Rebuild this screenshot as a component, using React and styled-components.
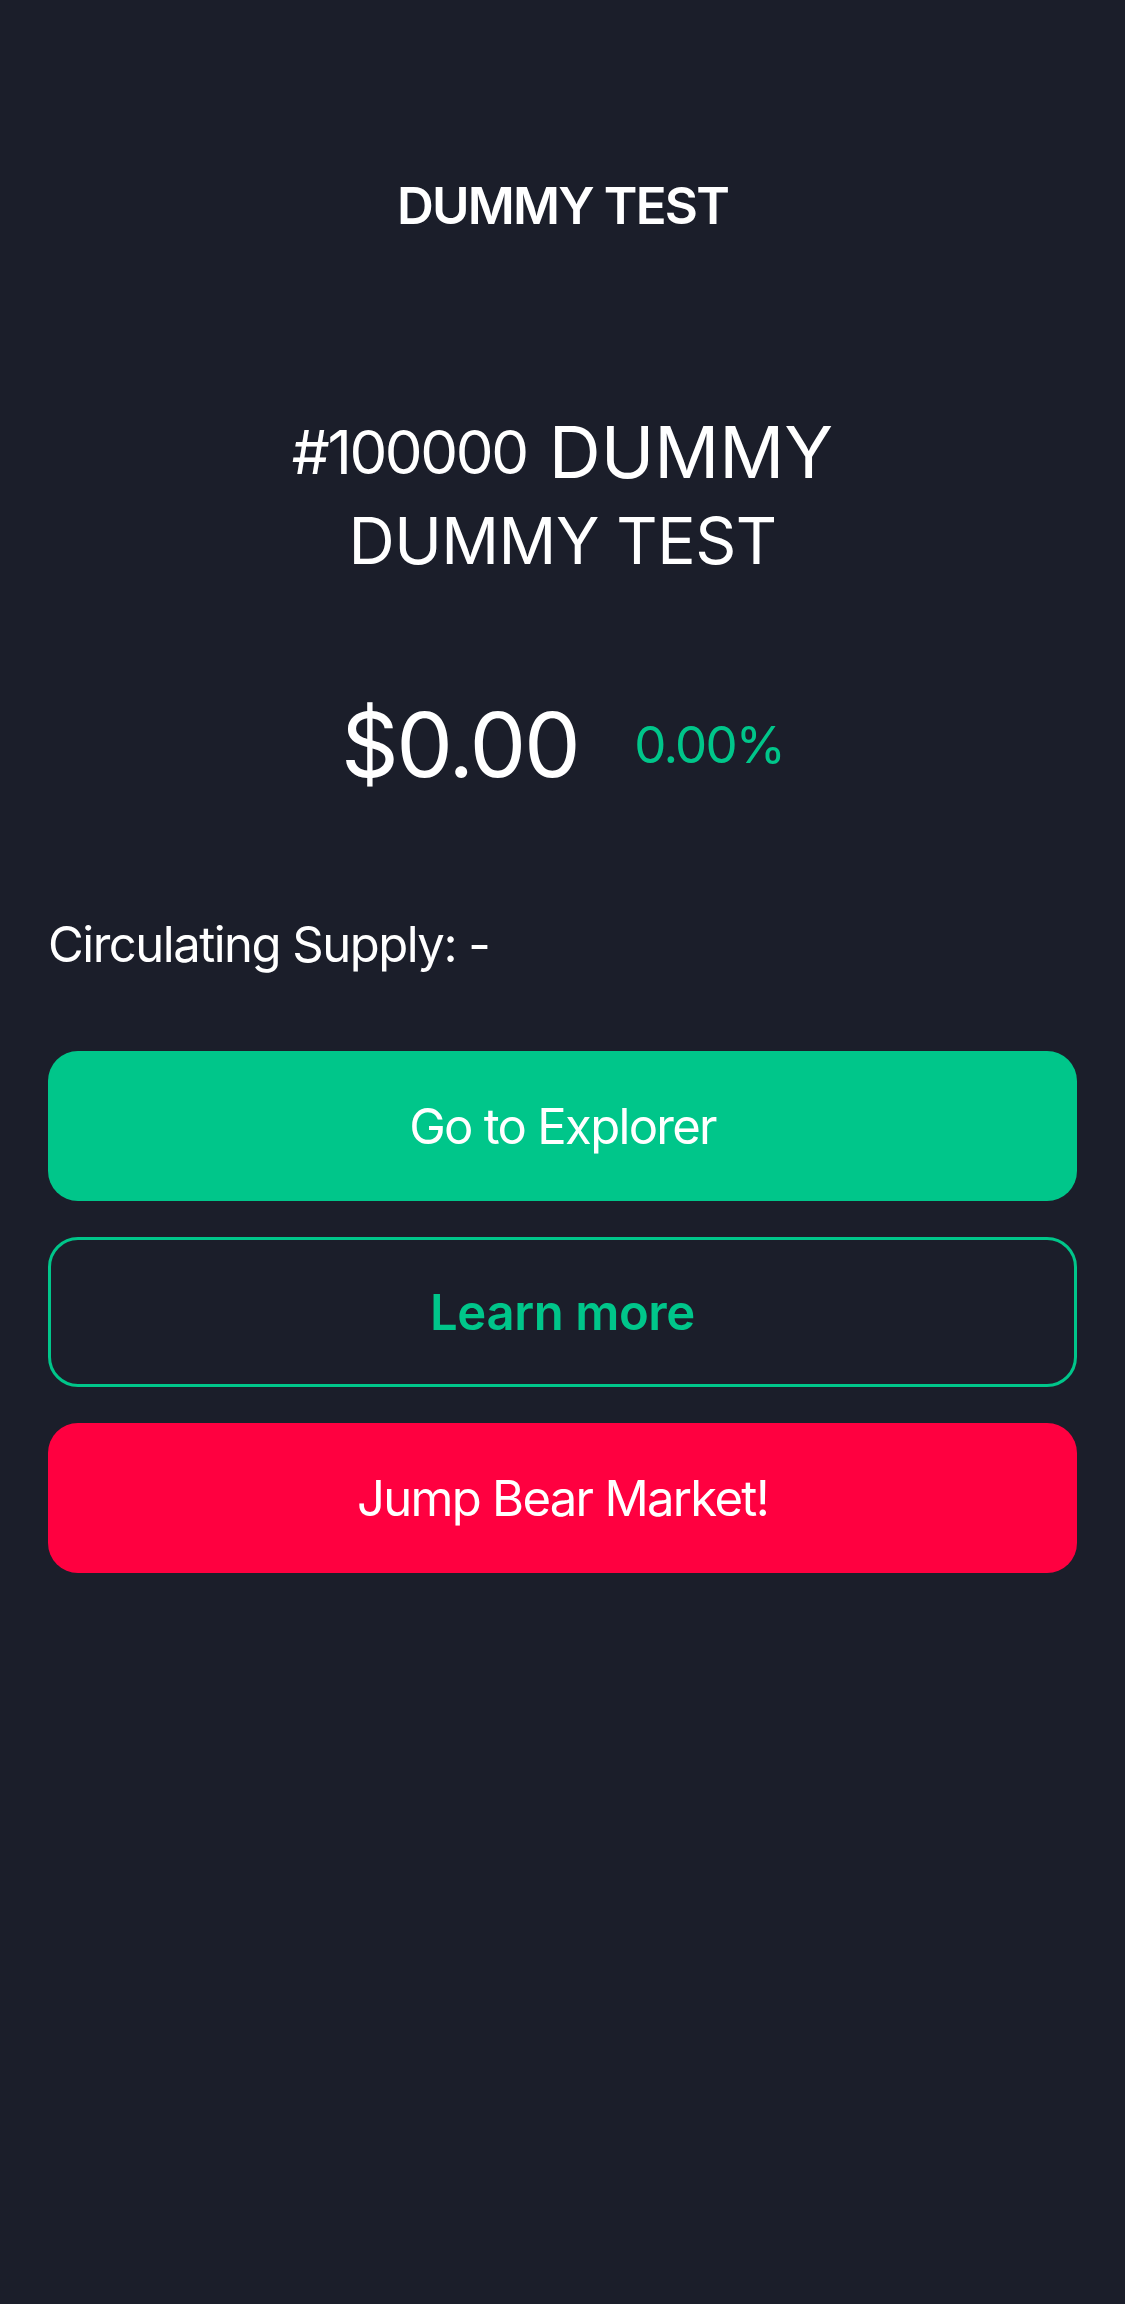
import React from 'react';
import styled, { createGlobalStyle } from 'styled-components';

const GlobalStyle = createGlobalStyle`
  html, body {
    margin: 0;
    padding: 0;
    background-color: #1b1e2a;
  }
  body {
    font-family: Inter, "Noto Sans", "Liberation Sans", sans-serif;
    color: #ffffff;
  }
`;

const Screen = styled.div`
  width: 1125px;
  min-height: 2304px;
  background-color: #1b1e2a;
  display: flex;
  flex-direction: column;
  align-items: center;
  box-sizing: border-box;
  padding: 176px 48px 0;
`;

const NavTitle = styled.h1`
  margin: 0;
  font-size: 51px;
  line-height: 60px;
  font-weight: 600;
  letter-spacing: -1.8px;
`;

const Title = styled.div`
  margin-top: 173px;
  display: flex;
  flex-direction: column;
  align-items: center;
`;

const TitleRow = styled.div`
  display: flex;
  align-items: center;
  justify-content: center;
  height: 86px;
  gap: 22px;
`;

const Rank = styled.span`
  font-size: 60px;
  line-height: 86px;
  letter-spacing: -2.4px;
`;

// second line of the name is set a little smaller, like the reference
const Name = styled.span`
  font-size: ${p => (p.$small ? '64px' : '72px')};
  line-height: ${p => (p.$small ? '80px' : '86px')};
  padding-top: ${p => (p.$small ? '6px' : '0')};
  letter-spacing: ${p => (p.$small ? '-0.5px' : '0')};
`;

const PriceRow = styled.div`
  margin-top: 109px;
  display: flex;
  align-items: center;
  justify-content: center;
  gap: 56px;
  height: 110px;
`;

const Price = styled.span`
  font-size: 90px;
  line-height: 110px;
  letter-spacing: -2.4px;
`;

const Change = styled.span`
  font-size: 51px;
  line-height: 60px;
  letter-spacing: -1.8px;
  color: #00c68a;
`;

const Supply = styled.p`
  align-self: stretch;
  margin: 115px 0 0;
  font-size: 49px;
  line-height: 60px;
  letter-spacing: -1.5px;
`;

const Actions = styled.div`
  align-self: stretch;
  margin-top: 76px;
  display: flex;
  flex-direction: column;
  gap: 36px;
`;

const Button = styled.button`
  height: 150px;
  width: 100%;
  box-sizing: border-box;
  border-radius: 30px;
  border: ${p => (p.$outline ? '3px solid #00c68a' : 'none')};
  background-color: ${p => (p.$outline ? 'transparent' : p.$color)};
  color: ${p => (p.$outline ? '#00c68a' : '#ffffff')};
  font-family: inherit;
  font-size: 49px;
  font-weight: ${p => (p.$outline ? 600 : 400)};
  letter-spacing: ${p => (p.$outline ? '-0.4px' : '-1.7px')};
  cursor: pointer;
`;

const App = () => {
  return (
    <>
      <GlobalStyle />
      <Screen>
        <NavTitle>DUMMY TEST</NavTitle>
        <Title>
          <TitleRow>
            <Rank>#100000</Rank>
            <Name>DUMMY</Name>
          </TitleRow>
          <TitleRow>
            <Name $small>DUMMY TEST</Name>
          </TitleRow>
        </Title>
        <PriceRow>
          <Price>$0.00</Price>
          <Change>0.00%</Change>
        </PriceRow>
        <Supply>Circulating Supply: -</Supply>
        <Actions>
          <Button $color="#00c68a">Go to Explorer</Button>
          <Button $outline>Learn more</Button>
          <Button $color="#ff0040">Jump Bear Market!</Button>
        </Actions>
      </Screen>
    </>
  );
};

export default App;
